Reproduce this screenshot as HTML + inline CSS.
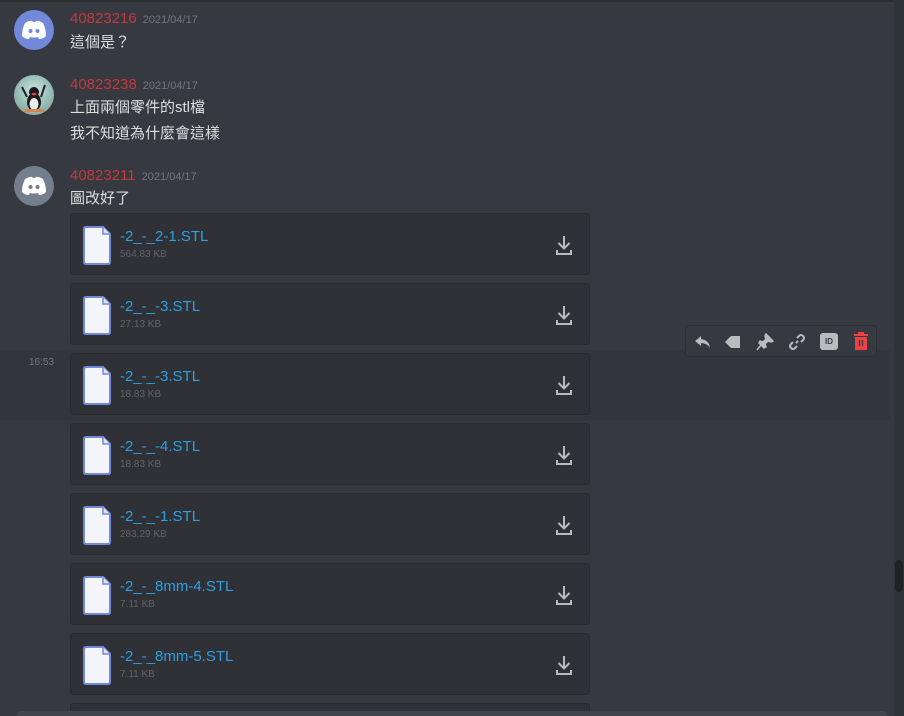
<!DOCTYPE html>
<html><head><meta charset="utf-8"><style>
*{margin:0;padding:0;box-sizing:border-box}
html,body{width:904px;height:716px;overflow:hidden}
body{background:#36393f;font-family:"Liberation Sans","Noto Sans CJK TC",sans-serif;position:relative}
.a{position:absolute}
.av{position:absolute;left:14px;width:40px;height:40px;border-radius:50%;display:flex;align-items:center;justify-content:center}
.nm{position:absolute;left:70px;font-size:15px;color:#c3393f;white-space:nowrap}
.nm span{font-size:11px;color:#72767d;margin-left:6px}
.tx{position:absolute;left:70px;font-size:15px;color:#dcddde;white-space:nowrap}
.att{position:absolute;left:70px;width:520px;height:62px;background:#2f3136;border:1px solid #292b2f;border-radius:3px}
.att .fi{position:absolute;left:12px;top:12px}
.att .fn{position:absolute;left:49px;top:14px;font-size:15px;color:#2c9fe0;white-space:nowrap}
.att .fs{position:absolute;left:49px;top:35px;font-size:10px;color:#5f6368}
.att .dl{position:absolute;left:484px;top:20px}
</style></head><body>
<div class="a" style="left:0;top:0;width:904px;height:2px;background:#2b2d31"></div>
<div class="a" style="left:0;top:350px;width:890px;height:70px;background:#32353b"></div>
<div class="a" style="left:894px;top:0;width:10px;height:716px;background:#2e3338"></div>
<div class="a" style="left:895px;top:560px;width:8px;height:32px;border-radius:4px;background:#202225"></div>

<div class="av" style="top:10px;background:#7289da"><svg width="26" height="20" viewBox="0 0 26 20"><path d="M4 3 Q9 0 11 1 L12 2 Q13 1.7 14 2 L15 1 Q17 0 22 3 Q25 9 25 16 Q22 19 18 19 L17 17 Q13 18 9 17 L8 19 Q4 19 1 16 Q1 9 4 3Z" fill="#fff"/><circle cx="9.5" cy="11" r="2" fill="#7289da"/><circle cx="16.5" cy="11" r="2" fill="#7289da"/></svg></div>
<div class="nm" style="top:10px">40823216<span>2021/04/17</span></div>
<div class="tx" style="top:31px">這個是？</div>

<div class="av" style="top:75px;background:radial-gradient(circle at 50% 40%,#cfe4df,#8fb7b0 60%,#a59a7a);overflow:hidden"><svg width="40" height="40"><ellipse cx="20" cy="27" rx="7" ry="9" fill="#1b1b1b"/><ellipse cx="20" cy="29" rx="4.5" ry="6" fill="#eee"/><circle cx="20" cy="17" r="5" fill="#1b1b1b"/><ellipse cx="20" cy="19" rx="2.5" ry="1.3" fill="#d44"/><path d="M13 22 L8 12 M27 22 L31 10" stroke="#222" stroke-width="2"/><rect x="10" y="34" width="20" height="3" fill="#c85"/></svg></div>
<div class="nm" style="top:76px">40823238<span>2021/04/17</span></div>
<div class="tx" style="top:96px">上面兩個零件的stl檔</div>
<div class="tx" style="top:122px">我不知道為什麼會這樣</div>

<div class="av" style="top:166px;background:#747f8d"><svg width="26" height="20" viewBox="0 0 26 20"><path d="M4 3 Q9 0 11 1 L12 2 Q13 1.7 14 2 L15 1 Q17 0 22 3 Q25 9 25 16 Q22 19 18 19 L17 17 Q13 18 9 17 L8 19 Q4 19 1 16 Q1 9 4 3Z" fill="#fff"/><circle cx="9.5" cy="11" r="2" fill="#747f8d"/><circle cx="16.5" cy="11" r="2" fill="#747f8d"/></svg></div>
<div class="nm" style="top:167px">40823211<span>2021/04/17</span></div>
<div class="tx" style="top:187px">圖改好了</div>

<div class="a" style="left:29px;top:357px;font-size:10px;color:#72767d">16:53</div>

<div class="att" style="top:213px"><svg class="fi" width="28" height="39" viewBox="0 0 28 39"><path d="M3 1 H20 L27 8 V36 Q27 38 25 38 H3 Q1 38 1 36 V3 Q1 1 3 1Z" fill="#f4f5fb" stroke="#7289da" stroke-width="2"/><path d="M20 1 V8 H27" fill="#dfe2f3" stroke="#7289da" stroke-width="1.5"/></svg><div class="fn">-2_-_2-1.STL</div><div class="fs">564.83 KB</div><svg class="dl" width="18" height="22" viewBox="0 0 18 22"><path d="M9 2 V14 M3.5 9 L9 14.5 L14.5 9 M2 16 V20 H16 V16" fill="none" stroke="#b9bbbe" stroke-width="2"/></svg></div>
<div class="att" style="top:283px"><svg class="fi" width="28" height="39" viewBox="0 0 28 39"><path d="M3 1 H20 L27 8 V36 Q27 38 25 38 H3 Q1 38 1 36 V3 Q1 1 3 1Z" fill="#f4f5fb" stroke="#7289da" stroke-width="2"/><path d="M20 1 V8 H27" fill="#dfe2f3" stroke="#7289da" stroke-width="1.5"/></svg><div class="fn">-2_-_-3.STL</div><div class="fs">27.13 KB</div><svg class="dl" width="18" height="22" viewBox="0 0 18 22"><path d="M9 2 V14 M3.5 9 L9 14.5 L14.5 9 M2 16 V20 H16 V16" fill="none" stroke="#b9bbbe" stroke-width="2"/></svg></div>
<div class="att" style="top:353px"><svg class="fi" width="28" height="39" viewBox="0 0 28 39"><path d="M3 1 H20 L27 8 V36 Q27 38 25 38 H3 Q1 38 1 36 V3 Q1 1 3 1Z" fill="#f4f5fb" stroke="#7289da" stroke-width="2"/><path d="M20 1 V8 H27" fill="#dfe2f3" stroke="#7289da" stroke-width="1.5"/></svg><div class="fn">-2_-_-3.STL</div><div class="fs">18.83 KB</div><svg class="dl" width="18" height="22" viewBox="0 0 18 22"><path d="M9 2 V14 M3.5 9 L9 14.5 L14.5 9 M2 16 V20 H16 V16" fill="none" stroke="#b9bbbe" stroke-width="2"/></svg></div>
<div class="att" style="top:423px"><svg class="fi" width="28" height="39" viewBox="0 0 28 39"><path d="M3 1 H20 L27 8 V36 Q27 38 25 38 H3 Q1 38 1 36 V3 Q1 1 3 1Z" fill="#f4f5fb" stroke="#7289da" stroke-width="2"/><path d="M20 1 V8 H27" fill="#dfe2f3" stroke="#7289da" stroke-width="1.5"/></svg><div class="fn">-2_-_-4.STL</div><div class="fs">18.83 KB</div><svg class="dl" width="18" height="22" viewBox="0 0 18 22"><path d="M9 2 V14 M3.5 9 L9 14.5 L14.5 9 M2 16 V20 H16 V16" fill="none" stroke="#b9bbbe" stroke-width="2"/></svg></div>
<div class="att" style="top:493px"><svg class="fi" width="28" height="39" viewBox="0 0 28 39"><path d="M3 1 H20 L27 8 V36 Q27 38 25 38 H3 Q1 38 1 36 V3 Q1 1 3 1Z" fill="#f4f5fb" stroke="#7289da" stroke-width="2"/><path d="M20 1 V8 H27" fill="#dfe2f3" stroke="#7289da" stroke-width="1.5"/></svg><div class="fn">-2_-_-1.STL</div><div class="fs">283.29 KB</div><svg class="dl" width="18" height="22" viewBox="0 0 18 22"><path d="M9 2 V14 M3.5 9 L9 14.5 L14.5 9 M2 16 V20 H16 V16" fill="none" stroke="#b9bbbe" stroke-width="2"/></svg></div>
<div class="att" style="top:563px"><svg class="fi" width="28" height="39" viewBox="0 0 28 39"><path d="M3 1 H20 L27 8 V36 Q27 38 25 38 H3 Q1 38 1 36 V3 Q1 1 3 1Z" fill="#f4f5fb" stroke="#7289da" stroke-width="2"/><path d="M20 1 V8 H27" fill="#dfe2f3" stroke="#7289da" stroke-width="1.5"/></svg><div class="fn">-2_-_8mm-4.STL</div><div class="fs">7.11 KB</div><svg class="dl" width="18" height="22" viewBox="0 0 18 22"><path d="M9 2 V14 M3.5 9 L9 14.5 L14.5 9 M2 16 V20 H16 V16" fill="none" stroke="#b9bbbe" stroke-width="2"/></svg></div>
<div class="att" style="top:633px"><svg class="fi" width="28" height="39" viewBox="0 0 28 39"><path d="M3 1 H20 L27 8 V36 Q27 38 25 38 H3 Q1 38 1 36 V3 Q1 1 3 1Z" fill="#f4f5fb" stroke="#7289da" stroke-width="2"/><path d="M20 1 V8 H27" fill="#dfe2f3" stroke="#7289da" stroke-width="1.5"/></svg><div class="fn">-2_-_8mm-5.STL</div><div class="fs">7.11 KB</div><svg class="dl" width="18" height="22" viewBox="0 0 18 22"><path d="M9 2 V14 M3.5 9 L9 14.5 L14.5 9 M2 16 V20 H16 V16" fill="none" stroke="#b9bbbe" stroke-width="2"/></svg></div>
<div class="att" style="top:703px;height:13px"></div>

<div class="a" style="left:16px;top:711px;width:872px;height:5px;border-radius:6px 6px 0 0;background:#40444b"></div>

<div class="a" style="left:685px;top:325px;width:192px;height:32px;background:#36393f;border:1px solid #2c2f33;border-radius:4px">
<svg class="a" style="left:8px;top:7px" width="18" height="18" viewBox="0 0 18 18"><path d="M7 3 L1 8 L7 13 V10 Q13 10 16 15 Q15 7 7 6Z" fill="#b9bbbe"/></svg>
<svg class="a" style="left:38px;top:7px" width="18" height="18" viewBox="0 0 18 18"><path d="M1 9 L7 3 H16 V15 H7Z" fill="#b9bbbe"/></svg>
<svg class="a" style="left:70px;top:7px" width="18" height="18" viewBox="0 0 18 18"><path d="M10 1 L17 8 L15 9 L12 8 L9 11 L10 14 L8 15 L3 10 L4 8 L7 9 L10 6 L9 3Z M5 12 L1 17" fill="#b9bbbe" stroke="#b9bbbe" stroke-width="1.5"/></svg>
<svg class="a" style="left:102px;top:7px" width="18" height="18" viewBox="0 0 18 18"><path d="M8 10 L10 8 M9 5 L11 3 Q13 1 15 3 Q17 5 15 7 L13 9 M9 13 L7 15 Q5 17 3 15 Q1 13 3 11 L5 9" fill="none" stroke="#b9bbbe" stroke-width="2"/></svg>
<div class="a" style="left:134px;top:7px;width:18px;height:17px;border-radius:3px;background:#b9bbbe;color:#36393f;font-size:8px;font-weight:bold;text-align:center;line-height:17px">ID</div>
<svg class="a" style="left:166px;top:6px" width="18" height="20" viewBox="0 0 18 20"><path d="M2 3 H16 M7 3 V1 H11 V3" stroke="#ed4245" stroke-width="2" fill="none"/><path d="M3 5 H15 V18 H3Z" fill="#ed4245"/><path d="M7.5 8 V14 M10.5 8 V14" stroke="#36393f" stroke-width="1.3"/></svg>
</div>
</body></html>
